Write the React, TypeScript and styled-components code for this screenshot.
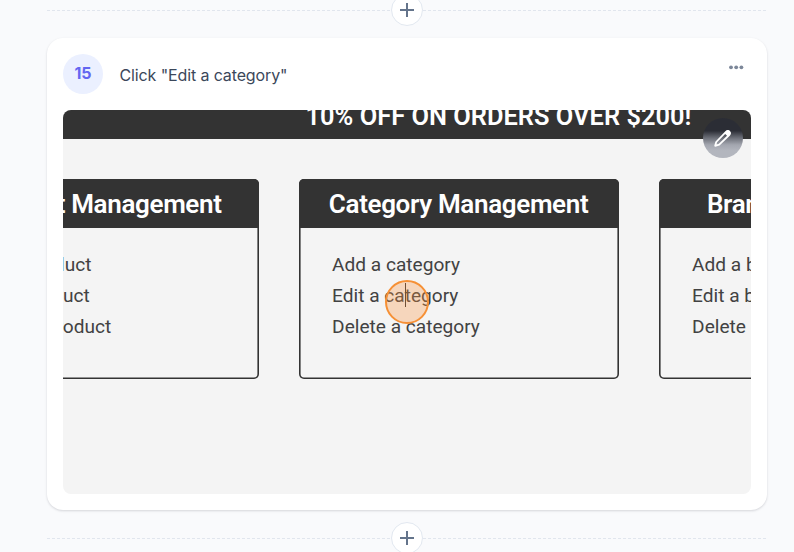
import React from "react";
import styled, { createGlobalStyle } from "styled-components";

const GlobalStyle = createGlobalStyle`
  * { box-sizing: border-box; }
  body {
    margin: 0;
    background: #f9fafc;
    overflow: hidden;
    font-family: "Inter", "Liberation Sans", sans-serif;
  }
`;

const Page = styled.main`
  width: 720px;
  height: 552px;
  margin-left: 47px;
  display: flex;
  flex-direction: column;
  overflow: visible;
`;

const DividerRow = styled.div<{ $top?: boolean }>`
  display: grid;
  grid-template-columns: 1fr 32px 1fr;
  align-items: center;
  height: 32px;
  flex: none;
  margin-top: ${(p) => (p.$top ? "-6px" : "12px")};
  margin-bottom: ${(p) => (p.$top ? "12px" : "0")};
`;

const Dashes = styled.span`
  height: 1px;
  margin-top: 1px;
  background: repeating-linear-gradient(90deg, #e1e6ee 0 3px, transparent 3px 5px);
`;

const AddButton = styled.button`
  width: 32px;
  height: 32px;
  padding: 0;
  display: grid;
  place-items: center;
  border: 1px solid #e2e8f0;
  border-radius: 50%;
  background: #fff;
  color: #64748b;
`;

const StepCard = styled.article`
  height: 472px;
  flex: none;
  padding: 16px;
  border-radius: 16px;
  background: #fff;
  box-shadow: 0 1px 3px rgba(15, 23, 42, 0.1), 0 1px 2px rgba(15, 23, 42, 0.06);
`;

const StepHeader = styled.header`
  height: 56px;
  display: flex;
  align-items: flex-start;
`;

const StepNumber = styled.span`
  width: 40px;
  height: 40px;
  display: grid;
  place-items: center;
  border-radius: 50%;
  background: #ebf0ff;
  color: #6366f1;
  font-size: 16px;
  font-weight: 700;
  line-height: 38px;
  padding-bottom: 2px;
`;

const StepTitle = styled.h1`
  margin: 9px 0 0 16.5px;
  flex: 1;
  color: #3b475a;
  font-size: 16px;
  font-weight: 400;
  line-height: 24px;
  letter-spacing: -0.12px;
`;

const MenuButton = styled.button`
  width: 16px;
  height: 8px;
  margin: 9px 7px 0 0;
  padding: 0;
  border: 0;
  background: none;
  display: grid;
`;

const Shot = styled.section`
  position: relative;
  height: 384px;
  overflow: hidden;
  border-radius: 8px;
  background: #f4f4f4;
  font-family: "Roboto", sans-serif;
`;

const Banner = styled.div`
  height: 28.5px;
  padding-left: 242.5px;
  background: #333;
  color: #fff;
  font-size: 25.4px;
  font-weight: 600;
  line-height: 13px;
  letter-spacing: 0.02px;
  white-space: nowrap;
`;

const Panels = styled.div`
  display: grid;
  grid-template-columns: repeat(3, 320px);
  gap: 40px;
  margin: 40px 0 0 -124.4px;
`;

const Panel = styled.section`
  height: 200.5px;
  overflow: hidden;
  border-radius: 5px;
  box-shadow: inset 0 0 0 1.6px #333;
`;

const PanelTitle = styled.h2`
  height: 49.5px;
  margin: 0;
  background: #333;
  color: #fff;
  font-size: 26px;
  font-weight: 600;
  line-height: 51px;
  letter-spacing: -0.34px;
  text-align: center;
  white-space: nowrap;
`;

const Links = styled.ul`
  margin: 20.7px 0 0;
  padding: 0 0 0 33.5px;
  list-style: none;
  color: #424242;
  font-size: 19.1px;
  line-height: 31.2px;
`;

const EditButton = styled.button`
  position: absolute;
  top: 8px;
  right: 8px;
  width: 40px;
  height: 40px;
  padding: 0;
  display: grid;
  place-items: center;
  border: 0;
  border-radius: 50%;
  background: linear-gradient(#2b2d35 0 32%, #6d7079 50%, #a3a6af 67%, #b3b6be 82%);
`;

const ClickMarker = styled.span`
  position: absolute;
  left: 322px;
  top: 170px;
  width: 44px;
  height: 44px;
  border: 2px solid #f69035;
  border-radius: 50%;
  background: rgba(251, 146, 60, 0.3);
`;

const TextCursor = styled.span`
  position: absolute;
  left: 342px;
  top: 173px;
  width: 1px;
  height: 24px;
  background: #333;
`;

const panels = ["Product", "Category", "Brand"];

function Divider({ top = false }: { top?: boolean }) {
  return (
    <DividerRow $top={top}>
      <Dashes />
      <AddButton aria-label="Add step">
        <svg width="14" height="14" viewBox="0 0 14 14">
          <path d="M7 0v14M0 7h14" stroke="currentColor" strokeWidth="2" />
        </svg>
      </AddButton>
      <Dashes />
    </DividerRow>
  );
}

export default function App() {
  return (
    <>
      <GlobalStyle />
      <Page>
        <Divider top />
        <StepCard>
          <StepHeader>
            <StepNumber>15</StepNumber>
            <StepTitle>Click "Edit a category"</StepTitle>
            <MenuButton aria-label="Step options">
              <svg width="16" height="8" viewBox="0 0 16 8" fill="#7c8799">
                <circle cx="3" cy="4.3" r="1.9" />
                <circle cx="8.2" cy="4.3" r="1.9" />
                <circle cx="13.4" cy="4.3" r="1.9" />
              </svg>
            </MenuButton>
          </StepHeader>
          <Shot>
            <Banner>10% OFF ON ORDERS OVER $200!</Banner>
            <Panels>
              {panels.map((name) => (
                <Panel key={name}>
                  <PanelTitle>{name} Management</PanelTitle>
                  <Links>
                    <li>Add a {name.toLowerCase()}</li>
                    <li>Edit a {name.toLowerCase()}</li>
                    <li>Delete a {name.toLowerCase()}</li>
                  </Links>
                </Panel>
              ))}
            </Panels>
            <TextCursor />
            <ClickMarker />
            <EditButton aria-label="Edit screenshot">
              <svg width="20" height="20" viewBox="0 0 20 20" fill="none">
                <path d="M2.2 17.8 3.2 14 13 3.8a2.2 2.2 0 0 1 3.2 3.2L6.2 16.6Z" stroke="#fff" strokeWidth="1.8" strokeLinejoin="round" />
                <path d="M11.4 5.2 13.5 2.9c2.4-2 5.3 1 3.4 3.4l-2.1 2.2Z" fill="#fff" />
              </svg>
            </EditButton>
          </Shot>
        </StepCard>
        <Divider />
      </Page>
    </>
  );
}
